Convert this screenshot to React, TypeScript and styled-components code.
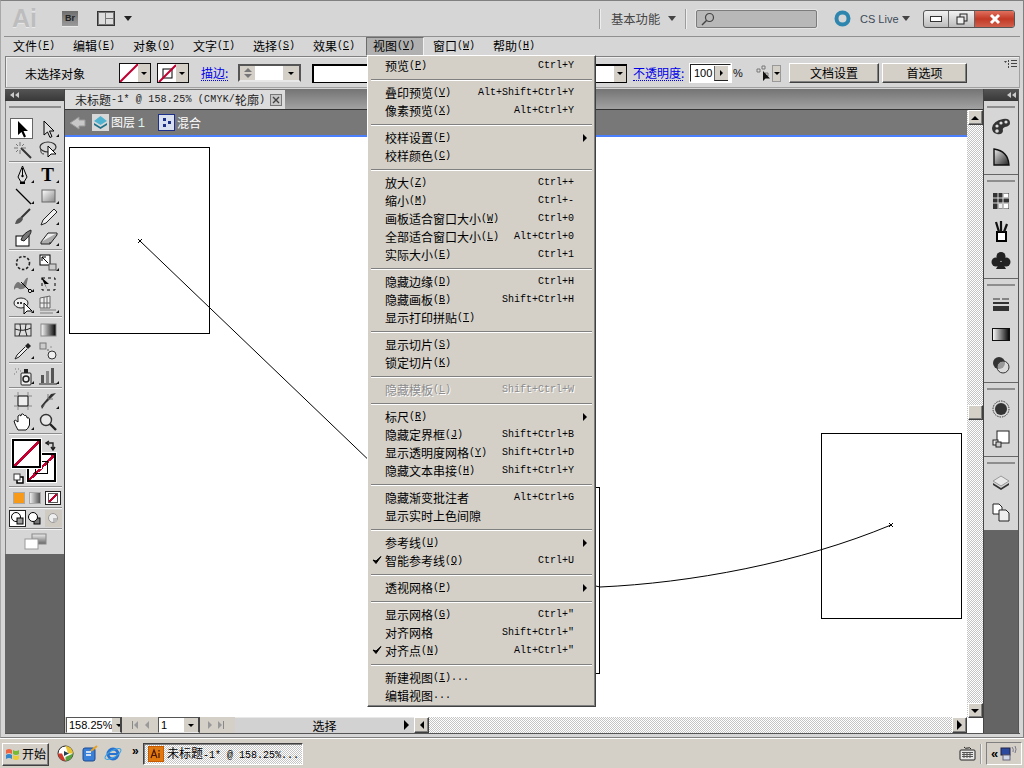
import React from "react";
import styled, { createGlobalStyle, css } from "styled-components";

const Global = createGlobalStyle`
  html, body { margin: 0; padding: 0; background: #d4d0c8; overflow: hidden; }
  body { font-family: "Noto Sans CJK SC", "Liberation Sans", sans-serif; font-size: 12px; color: #000; }
  svg { display: block; flex: none; }
`;

const raised = css`
  border: 1px solid; border-color: #fff #404040 #404040 #fff;
  box-shadow: inset -1px -1px 0 #808080;
`;
const sunken = css`
  border: 1px solid; border-color: #404040 #fff #fff #404040;
  box-shadow: inset 1px 1px 0 #808080, 0 0 0 0 #fff;
`;
const checker = css`
  background: repeating-conic-gradient(#fff 0 25%, #c4c4c4 0 50%) 0 0 / 2px 2px;
`;

const Root = styled.div`
  position: relative; width: 1024px; height: 768px; overflow: hidden;
  display: flex; flex-direction: column; background: #d6d6d6;
`;
const Frame = styled.div`
  height: 738px; display: flex; flex-direction: column; flex: none;
  border-top: 1px solid #808080; border-left: 1px solid #a8a8a8; border-right: 1px solid #808080; border-bottom: 1px solid #808080;
  box-sizing: border-box; background: #d6d6d6; padding: 0 3px 3px;
`;

/* App title bar */
const AppBar = styled.header`
  height: 35px; flex: none; display: flex; align-items: center; border-bottom: 1px solid #909090;
  box-sizing: content-box; margin: 0;
`;
const AiMark = styled.span`
  font: bold 25px/1 "Liberation Sans", sans-serif; color: #bdbdbd; margin-left: 8px; width: 41px;
  text-shadow: 0 1px 0 #e8e8e8;
`;
const BrBox = styled.span`
  width: 16px; height: 16px; box-sizing: border-box; margin-left: 9px; display: flex; align-items: center; justify-content: center;
  font: bold 9px "Liberation Sans", sans-serif; color: #222; background: linear-gradient(#6e6e6e, #9a9a9a);
  border-bottom: 1px solid #e8e8e8;
`;
const LayoutBtn = styled.span`
  width: 18px; height: 15px; box-sizing: border-box; margin-left: 19px; border: 1px solid #333; background: #777;
  display: grid; grid-template-columns: 6px 1fr; grid-template-rows: 1fr 1fr; gap: 1px; padding: 1px;
  & > i { background: #ddd; } & > i:first-child { grid-row: span 2; }
`;
const Drop = styled.span<{ $ml?: number; $c?: string }>`
  width: 0; height: 0; flex: none; margin-left: ${p => p.$ml ?? 0}px;
  border-left: 4px solid transparent; border-right: 4px solid transparent; border-top: 5px solid ${p => p.$c ?? "#222"};
`;
const Vr = styled.span<{ $ml: number }>`
  width: 1px; height: 20px; background: #9c9c9c; box-shadow: 1px 0 0 #eee; margin-left: ${p => p.$ml}px; flex: none;
`;
const WorkspaceName = styled.span`
  color: #444; margin-left: 11px; width: 49px; font-size: 12.3px; white-space: nowrap;
`;
const Search = styled.div`
  width: 121px; height: 18px; margin-left: 10px; box-sizing: border-box; background: #b8b8b8; border: 1px solid #7c7c7c;
  border-radius: 2px; box-shadow: 0 0 0 1px #e4e4e4; display: flex; align-items: center; padding-left: 4px;
`;
const RingWrap = styled.span` margin-left: 17px; flex: none; `;
const LiveText = styled.span`
  font: 11px "Liberation Sans", sans-serif; color: #3c4a58; margin-left: 9px; width: 38px; white-space: nowrap;
`;
const WinBtns = styled.div`
  display: flex; height: 18px; width: 92px; margin-left: 13px; flex: none; box-sizing: border-box;
  border: 1px solid #555; border-radius: 3px; overflow: hidden; background: linear-gradient(#f2f2f2, #bcbcbc);
`;
const WinBtn = styled.span<{ $w: number; $close?: boolean }>`
  width: ${p => p.$w}px; display: flex; align-items: center; justify-content: center; flex: none; box-sizing: border-box;
  border-right: 1px solid #666;
  ${p => p.$close && css`border: 0; background: linear-gradient(#e0705e, #c23a26 50%, #d0604c);`}
`;

/* Menu bar */
const MenuBar = styled.nav`
  height: 19px; flex: none; display: flex; padding-left: 2px; align-items: stretch;
`;
const MenuTop = styled.span<{ $active?: boolean }>`
  width: 60px; flex: none; box-sizing: border-box; padding: 0 0 1px 7px; display: flex; align-items: center; white-space: nowrap; line-height: 1;
  ${p => p.$active && css`
    width: 58px; margin-right: 2px; background: #b0b0b0; border: 1px solid; border-color: #6c6c6c #f0f0f0 #f0f0f0 #6c6c6c; padding-left: 6px;
  `}
`;
const Latin = styled.span`
  font-family: "Liberation Mono", monospace; font-size: 10px;
  & u { text-decoration-thickness: 1px; text-underline-offset: 1px; }
`;
const TabLatin = styled(Latin)` letter-spacing: .2px; `;

/* Control bar */
const ControlBar = styled.div`
  height: 32px; flex: none; display: flex; align-items: center; box-sizing: border-box; position: relative; padding-top: 2px;
  border: 1px solid; border-color: #808080 #a0a0a0 #a0a0a0 #808080; margin: 0 0 0 1px; box-shadow: inset 1px 1px 0 #eee;
`;
const Gripper = styled.span`
  width: 3px; height: 18px; margin-left: 4px; flex: none;
  background: radial-gradient(circle, #8a8a8a 45%, transparent 50%) 0 0 / 2px 2px;
`;
const NoSel = styled.span` margin-left: 12px; width: 94px; flex: none; white-space: nowrap; `;
const Swatch = styled.span<{ $ml: number }>`
  display: flex; width: 32px; height: 20px; box-sizing: border-box; border: 1px solid #111; margin-left: ${p => p.$ml}px; flex: none;
  background: #fff; box-shadow: 0 0 0 0 #fff;
`;
const SwatchDrop = styled.span<{ $w?: number }>`
  width: ${p => p.$w ?? 12}px; background: #d4d0c8; display: flex; align-items: center; justify-content: center; flex: none; box-sizing: border-box; margin-left: auto;
`;
const LinkLabel = styled.span<{ $ml: number; $w: number }>`
  color: #0000e6; margin-left: ${p => p.$ml}px; width: ${p => p.$w}px; flex: none; white-space: nowrap; line-height: 14px;
  border-bottom: 1px dotted #0000e6;
`;
const Spinner = styled.span`
  display: flex; width: 63px; height: 18px; box-sizing: border-box; margin-left: 10px; flex: none; border: 2px solid; border-color: #555 #555 #e8e8e8 #555;
  background: #fff;
`;
const SpinBtns = styled.span`
  width: 15px; background: #d4d0c8; display: flex; flex-direction: column; align-items: center; justify-content: space-around; flex: none; padding: 1px 0; box-sizing: border-box;
`;
const Tri = styled.span<{ $dir: "up" | "down" | "left" | "right"; $c?: string; $s?: number }>`
  width: 0; height: 0; flex: none; display: block;
  ${p => {
    const s = p.$s ?? 4; const c = p.$c ?? "#000";
    switch (p.$dir) {
      case "up": return `border-left:${s}px solid transparent;border-right:${s}px solid transparent;border-bottom:${s}px solid ${c};`;
      case "down": return `border-left:${s}px solid transparent;border-right:${s}px solid transparent;border-top:${s}px solid ${c};`;
      case "left": return `border-top:${s}px solid transparent;border-bottom:${s}px solid transparent;border-right:${s}px solid ${c};`;
      default: return `border-top:${s}px solid transparent;border-bottom:${s}px solid transparent;border-left:${s}px solid ${c};`;
    }
  }}
`;
const BrushField = styled.span`
  display: flex; width: 315px; height: 19px; box-sizing: border-box; margin-left: 11px; flex: none;
  border: 1px solid #000; border-right-color: #111; border-top-width: 2px; border-left-width: 2px; background: #fff;
`;
const OpacityInput = styled.span`
  display: flex; align-items: center; width: 41px; height: 18px; box-sizing: border-box; margin-left: 7px; flex: none;
  border: 1px solid; border-color: #222 #fff #fff #222; background: #fff; outline: 1px solid #fff;
  font: 11px "Liberation Sans", sans-serif; padding-left: 3px;
`;
const OpacityStep = styled.span`
  width: 14px; height: 15px; margin-left: auto; background: #d4d0c8; display: flex; align-items: center; justify-content: center; box-sizing: border-box;
  border-left: 1px solid #666; border-bottom: 1px solid #222; margin-right: 2px;
`;
const Percent = styled.span` font: 11px "Liberation Sans", sans-serif; margin-left: 2px; width: 22px; flex: none; color: #111; `;
const IsoDrop = styled.span`
  width: 9px; height: 17px; box-sizing: border-box; border: 1px solid #999; margin-left: 1px; display: flex; align-items: center; justify-content: center; background: #d4d0c8; flex: none;
`;
const PushBtn = styled.span<{ $w: number; $ml: number }>`
  ${raised}
  width: ${p => p.$w}px; height: 20px; margin-left: ${p => p.$ml}px; box-sizing: border-box; flex: none;
  background: #d4d0c8; display: flex; align-items: center; justify-content: center; white-space: nowrap; line-height: 1;
`;
const PanelMenu = styled.span`
  position: absolute; right: 2px; top: 2px;
`;

/* Workspace */
const Work = styled.div`
  flex: 1; min-height: 0; display: flex; margin: 1px 0 0 1px; border-bottom: 1px solid #555;
`;
const DockHeader = styled.div`
  height: 12px; flex: none; background: linear-gradient(#555, #383838); display: flex; align-items: center;
`;
const DockChevrons = styled.span<{ $ml: number }>` margin-left: ${p => p.$ml}px; `;
const LeftDock = styled.aside`
  width: 60px; flex: none; display: flex; flex-direction: column; background: #646464; border-right: 1px solid #444; box-sizing: border-box;
`;
const ToolPanel = styled.div`
  background: #d6d6d6; height: 453px; flex: none; display: flex; flex-direction: column; align-items: center;
  border-left: 1px solid #808080; box-sizing: border-box; padding-top: 5px;
`;
const Dots = styled.span<{ $w: number }>`
  width: ${p => p.$w}px; height: 2px; flex: none;
  background: radial-gradient(circle, #8e8e8e 50%, transparent 55%) 0 0 / 2px 2px;
`;
const ToolGrid = styled.div<{ $pt?: number }>`
  display: grid; grid-template-columns: 25px 25px; grid-auto-rows: 21px; padding: ${p => p.$pt ?? 1}px 0 1px; width: 50px;
`;
const Tool = styled.span<{ $fly?: boolean; $sel?: boolean }>`
  position: relative; display: flex; align-items: center; justify-content: center;
  ${p => p.$sel && css`background: #fff; border: 1px solid #666; margin: 0 2px 0 0; box-sizing: border-box;`}
  ${p => p.$fly && css`
    &::after { content: ""; position: absolute; right: 1px; bottom: 2px; border-left: 3px solid transparent; border-bottom: 3px solid #111; }
  `}
`;
const Rule = styled.div`
  width: 53px; height: 1px; background: #8c8c8c; box-shadow: 0 1px 0 #f4f4f4; margin-bottom: 1px; flex: none;
`;
const FillStroke = styled.div`
  position: relative; width: 50px; height: 50px; flex: none; margin-top: 1px;
`;
const FillBox = styled.span`
  position: absolute; left: 2px; top: 3px; width: 29px; height: 29px; box-sizing: border-box; z-index: 2;
  border: 2px solid #000; outline: 1px solid #fff;
  background: linear-gradient(to top left, #fff 46%, #c00030 46%, #c00030 54%, #fff 54%);
`;
const StrokeBox = styled.span`
  position: absolute; left: 17px; top: 17px; width: 29px; height: 29px; box-sizing: border-box; z-index: 1;
  border: 2px solid #000; outline: 1px solid #fff;
  background: linear-gradient(to top left, #fff 46%, #c00030 46%, #c00030 54%, #fff 54%);
  &::after { content: ""; position: absolute; left: 6px; top: 6px; width: 11px; height: 11px; border: 1px solid #000; }
`;
const SwapMark = styled.span` position: absolute; right: 3px; top: 3px; `;
const DefaultMark = styled.span` position: absolute; left: 3px; bottom: 2px; z-index: 3; `;
const ColorModes = styled.div`
  display: flex; align-items: center; width: 53px; height: 16px; margin-top: 2px; margin-bottom: 1px; justify-content: space-between; padding: 0 1px 0 4px; box-sizing: border-box;
`;
const ModeFill = styled.span<{ $bg: string }>`
  width: 10px; height: 10px; border: 1px solid #aaa; background: ${p => p.$bg}; display: block;
`;
const ModeNone = styled.span`
  width: 16px; height: 14px; box-sizing: border-box; border: 1px solid #222; background: #fff; padding: 1px 2px; display: flex;
  & > i { flex: 1; background: linear-gradient(to top left, #fff 42%, #c00030 42%, #c00030 58%, #fff 58%); border: 1px solid #555; }
`;
const DrawModes = styled.div` display: flex; width: 53px; height: 19px; align-items: center; gap: 1px; `;
const DrawMode = styled.span<{ $sel?: boolean; $dim?: boolean }>`
  width: 17px; height: 17px; box-sizing: border-box; display: flex; align-items: center; justify-content: center;
  ${p => p.$sel && "border: 1px solid #222; background: #fff;"}
  ${p => p.$dim && "background: #cfcbc3; margin-left: 1px;"}
`;
const ScreenBtn = styled.div` height: 22px; display: flex; align-items: center; justify-content: center; width: 53px; flex: none; margin-top: 1px; `;

const DocArea = styled.div` width: 918px; flex: none; display: flex; flex-direction: column; min-width: 0; `;
const TabStrip = styled.div`
  height: 21px; flex: none; display: flex; background: linear-gradient(#747474, #a2a2a2); border-bottom: 1px solid #333; box-sizing: border-box;
`;
const DocTab = styled.div`
  width: 220px; height: 19px; margin-top: 1px; box-sizing: border-box; background: #dcdcdc; display: flex; align-items: center; padding-left: 10px; white-space: nowrap; line-height: 1; position: relative; color: #222;
`;
const CloseX = styled.span`
  margin-left: auto; margin-right: 3px; width: 12px; height: 12px; box-sizing: border-box; background: #c8c8c8; border: 1px solid #777; display: flex; align-items: center; justify-content: center; flex: none;
`;
const DocBody = styled.div` flex: 1; min-height: 0; display: flex; `;
const DocMain = styled.div` width: 902px; flex: none; display: flex; flex-direction: column; `;
const LayerBar = styled.div`
  height: 25px; flex: none; background: #787878; display: flex; align-items: center; padding-left: 4px; color: #fff; line-height: 1;
`;
const LayerIcon = styled.span` margin-left: 5px; flex: none; `;
const LayerText = styled.span<{ $w?: number }>` margin-left: 2px; white-space: nowrap; width: ${p => p.$w ?? 36}px; flex: none; `;
const CrumbNum = styled.span` font-family: "Liberation Mono", monospace; font-size: 12px; color: #dff5ea; `;
const Canvas = styled.div`
  position: relative; flex: 1; min-height: 0; border-top: 2px solid #4a7fff; background: #fff; overflow: hidden;
`;
const Artboard = styled.div<{ $x: number; $y: number; $w: number; $h: number }>`
  position: absolute; left: ${p => p.$x}px; top: ${p => p.$y}px; width: ${p => p.$w}px; height: ${p => p.$h}px;
  box-sizing: border-box; border: 1px solid #000;
`;
const Artwork = styled.svg` position: absolute; left: 0; top: 0; `;

const StatusBar = styled.div`
  height: 16px; flex: none; display: flex; align-items: stretch; background: #d4d0c8;
`;
const ZoomBox = styled.span<{ $w: number; $ml: number }>`
  display: flex; width: ${p => p.$w}px; margin-left: ${p => p.$ml}px; box-sizing: border-box; flex: none; background: #fff;
  border: 1px solid; border-color: #555 #444 #e8e8e8 #555; border-width: 1px 2px 1px 1px;
  font: 11px/14px "Liberation Sans", sans-serif; padding-left: 2px; align-items: center; overflow: hidden;
`;
const BoxDrop = styled.span`
  width: 14px; align-self: stretch; margin-left: auto; background: #d4d0c8; display: flex; align-items: center; justify-content: center; flex: none;
`;
const NavGroup = styled.span<{ $w: number }>`
  width: ${p => p.$w}px; flex: none; display: flex; align-items: center; justify-content: space-around; padding: 0 5px; box-sizing: border-box;
`;
const NavEnd = styled.span<{ $flip?: boolean }>`
  display: flex; align-items: center; ${p => p.$flip && "flex-direction: row-reverse;"}
  & > b { width: 1px; height: 8px; background: #888; margin: 0 1px; }
`;
const StatusField = styled.span`
  position: relative; width: 179px; flex: none; background: #d2d2d2; display: flex; align-items: center; justify-content: center; margin-left: 2px; line-height: 1; border-top: 1px solid #e8e8e8; box-sizing: border-box;
`;
const StatusArrow = styled.span` position: absolute; right: 5px; top: 2px; `;
const ScrollBtn = styled.span<{ $w?: number; $h?: number }>`
  ${raised}
  width: ${p => p.$w ?? 15}px; height: ${p => p.$h ?? 15}px; box-sizing: border-box; background: #d4d0c8; display: flex; align-items: center; justify-content: center; flex: none;
`;
const HTrack = styled.span` flex: 1; ${checker} `;
const VScroll = styled.div`
  width: 16px; flex: none; display: flex; flex-direction: column; align-items: center; ${checker}
`;
const VGap = styled.span<{ $h: number }>` height: ${p => p.$h}px; flex: none; `;
const VCorner = styled.span` width: 16px; flex: 1; background: #fff; `;

const RightDock = styled.aside`
  width: 36px; flex: none; display: flex; flex-direction: column; background: #646464; border-left: 1px solid #444; box-sizing: border-box; border-right: 1px solid #555;
`;
const DockGroup = styled.div<{ $h: number }>`
  height: ${p => p.$h}px; background: #d6d6d6; flex: none; box-sizing: border-box; border-bottom: 1px solid #666;
  display: flex; flex-direction: column; align-items: center; padding-top: 5px;
`;
const DockIcon = styled.span`
  height: 30px; flex: none; width: 100%; display: flex; align-items: center; justify-content: center;
  ${Dots} + & { margin-top: 4px; }
`;

/* Menu popup */
const Menu = styled.div`
  position: absolute; left: 367px; top: 55px; width: 229px; height: 652px; box-sizing: border-box; z-index: 5;
  background: #d4d0c8; border: 1px solid; border-color: #fff #404040 #404040 #fff; box-shadow: inset -1px -1px 0 #808080;
  padding-top: 1px; line-height: 1; font-size: 12px;
`;
const Row = styled.div<{ $off?: boolean }>`
  position: relative; height: 18px; display: flex; align-items: center; padding: 0 21px 0 17px; white-space: nowrap;
  ${p => p.$off && "color: #8c8c8c; text-shadow: 1px 1px 0 #fff;"}
`;
const Shortcut = styled.span`
  margin-left: auto; font-family: "Liberation Mono", monospace; font-size: 10px;
`;
const Sub = styled.span`
  position: absolute; right: 8px; top: 5px; border-top: 4px solid transparent; border-bottom: 4px solid transparent; border-left: 4px solid #000;
`;
const Check = styled.span` position: absolute; left: 4px; top: 3px; `;
const Sep = styled.div`
  height: 9px; display: flex; align-items: center; padding: 0 3px;
  &::before { content: ""; display: block; flex: 1; height: 1px; background: #808080; box-shadow: 0 1px 0 #fff; }
`;

/* Windows taskbar */
const Taskbar = styled.footer`
  height: 30px; flex: none; background: #d4d0c8; border-top: 1px solid #fff; box-sizing: border-box; display: flex; align-items: center; padding-left: 2px;
`;
const StartBtn = styled.span`
  ${raised}
  width: 47px; height: 23px; box-sizing: border-box; display: flex; align-items: center; padding-left: 2px; gap: 2px; flex: none; line-height: 1; margin-top: 1px;
`;
const Quick = styled.span<{ $ml: number }>` margin-left: ${p => p.$ml}px; flex: none; `;
const Chev = styled.span`
  font: bold 12px "Liberation Sans", sans-serif; margin-left: 10px; margin-top: -5px; width: 11px; flex: none;
`;
const TaskBtn = styled.span`
  ${sunken}
  ${checker}
  width: 160px; height: 22px; box-sizing: border-box; display: flex; align-items: center; padding-left: 4px; gap: 3px; flex: none; white-space: nowrap; line-height: 1;
`;
const Tray = styled.span`
  margin-left: auto; display: flex; align-items: center; height: 100%;
`;
const TrayBox = styled.span`
  width: 36px; height: 23px; box-sizing: border-box; margin: 0 2px 0 5px; border: 1px solid; border-color: #808080 #fff #fff #808080; display: flex; align-items: center; gap: 2px; padding-left: 4px; font: bold 13px "Liberation Sans", sans-serif;
`;

const S: React.FC<{ s?: number; w?: number; h?: number; vb?: string; children: React.ReactNode }> = ({ s = 20, w, h, vb, children }) => (
  <svg width={w ?? s} height={h ?? s} viewBox={vb ?? `0 0 ${w ?? s} ${h ?? s}`}>{children}</svg>
);

const Mn: React.FC<{ k: string }> = ({ k }) => <Latin>(<u>{k}</u>)</Latin>;

type Entry = { sep: true } | { t: string; k?: string; sc?: string; sub?: boolean; ck?: boolean; off?: boolean; tail?: string };
const SEP: Entry = { sep: true };
const ITEMS: Entry[] = [
  { t: "预览", k: "P", sc: "Ctrl+Y" }, SEP,
  { t: "叠印预览", k: "V", sc: "Alt+Shift+Ctrl+Y" }, { t: "像素预览", k: "X", sc: "Alt+Ctrl+Y" }, SEP,
  { t: "校样设置", k: "F", sub: true }, { t: "校样颜色", k: "C" }, SEP,
  { t: "放大", k: "Z", sc: "Ctrl++" }, { t: "缩小", k: "M", sc: "Ctrl+-" },
  { t: "画板适合窗口大小", k: "W", sc: "Ctrl+0" }, { t: "全部适合窗口大小", k: "L", sc: "Alt+Ctrl+0" }, { t: "实际大小", k: "E", sc: "Ctrl+1" }, SEP,
  { t: "隐藏边缘", k: "D", sc: "Ctrl+H" }, { t: "隐藏画板", k: "B", sc: "Shift+Ctrl+H" }, { t: "显示打印拼贴", k: "T" }, SEP,
  { t: "显示切片", k: "S" }, { t: "锁定切片", k: "K" }, SEP,
  { t: "隐藏模板", k: "L", sc: "Shift+Ctrl+W", off: true }, SEP,
  { t: "标尺", k: "R", sub: true }, { t: "隐藏定界框", k: "J", sc: "Shift+Ctrl+B" }, { t: "显示透明度网格", k: "Y", sc: "Shift+Ctrl+D" }, { t: "隐藏文本串接", k: "H", sc: "Shift+Ctrl+Y" }, SEP,
  { t: "隐藏渐变批注者", sc: "Alt+Ctrl+G" }, { t: "显示实时上色间隙" }, SEP,
  { t: "参考线", k: "U", sub: true }, { t: "智能参考线", k: "Q", sc: "Ctrl+U", ck: true }, SEP,
  { t: "透视网格", k: "P", sub: true }, SEP,
  { t: "显示网格", k: "G", sc: 'Ctrl+"' }, { t: "对齐网格", sc: 'Shift+Ctrl+"' }, { t: "对齐点", k: "N", sc: 'Alt+Ctrl+"', ck: true }, SEP,
  { t: "新建视图", k: "I", tail: "..." }, { t: "编辑视图", tail: "..." },
];

const TOPS: [string, string][] = [["文件", "F"], ["编辑", "E"], ["对象", "O"], ["文字", "T"], ["选择", "S"], ["效果", "C"], ["视图", "V"], ["窗口", "W"], ["帮助", "H"]];

const CheckMark = () => <S w={10} h={10}><path d="M1 5 L4 8.5 L9 1.5 L4 6 Z" fill="#000" stroke="#000" strokeWidth="1" /></S>;

const RedSlash = ({ w, h }: { w: number; h: number }) => <S w={w} h={h}><line x1="0" y1={h} x2={w} y2="0" stroke="#c00030" strokeWidth="2" /></S>;

const Serif = styled.span` font: bold 19px/1 "Liberation Serif", serif; `;

/* tool icons (20x20) */
const Ic = {
  sel: <S><path d="M6 2 V16 L9.5 13 L12 18.5 L14 17.5 L11.5 12 L16 12 Z" fill="#000" /></S>,
  dsel: <S><path d="M6 2 V16 L9.5 13 L12 18.5 L14 17.5 L11.5 12 L16 12 Z" fill="#ddd" stroke="#000" /></S>,
  wand: <S><line x1="8" y1="8" x2="18" y2="18" stroke="#333" strokeWidth="2" /><path d="M7 2V6M7 10V14M1 8H5M9 8H13M3 4L5 6M11 4L9 6M3 12L5 10" stroke="#777" /></S>,
  lasso: <S><ellipse cx="10" cy="7" rx="8" ry="5" fill="none" stroke="#333" strokeWidth="1.2" /><path d="M3 9 Q2 14 6 14" fill="none" stroke="#333" /><path d="M10 6 V17 L13 14 L18 14 Z" fill="#fff" stroke="#000" /></S>,
  pen: <S><path d="M9.5 1 L14 12 L11 17 H8 L5 12 Z" fill="#ddd" stroke="#000" /><path d="M9.5 3V10" stroke="#000" /><circle cx="9.5" cy="11" r="1.2" fill="#000" /><rect x="7" y="17" width="5" height="2" fill="#000" /></S>,
  text: <Serif>T</Serif>,
  line: <S><line x1="3" y1="3" x2="18" y2="18" stroke="#000" strokeWidth="1.2" /></S>,
  rect: <S><defs><linearGradient id="gr1" x1="0" y1="0" x2="1" y2="1"><stop offset="0" stopColor="#fff" /><stop offset="1" stopColor="#888" /></linearGradient></defs><rect x="4" y="4" width="13" height="12" fill="url(#gr1)" stroke="#666" /></S>,
  brush: <S><path d="M17 2 L8 11" stroke="#333" strokeWidth="2" /><path d="M9 10 Q3 11 2 17 Q8 17 10 12 Z" fill="#555" /></S>,
  pencil: <S><path d="M16 2 L19 5 L8 16 L3 18 L5 13 Z" fill="#eee" stroke="#222" /></S>,
  blob: <S><rect x="3" y="8" width="13" height="10" fill="#fff" stroke="#000" /><path d="M8 12 Q10 5 18 2 Q19 6 11 13 Z" fill="#777" stroke="#222" /></S>,
  eraser: <S><path d="M3 14 L10 5 H19 L12 14 Z" fill="#eee" stroke="#222" /><path d="M3 14 V16 H12 L19 7 V5 M12 14 V16" fill="#aaa" stroke="#222" /></S>,
  rotate: <S><circle cx="10" cy="10" r="6.5" fill="none" stroke="#222" strokeWidth="1.6" strokeDasharray="2.5 1.8" /></S>,
  scale: <S><rect x="2" y="2" width="10" height="10" fill="#fff" stroke="#000" /><rect x="11" y="11" width="7" height="6" fill="#ccc" stroke="#555" /><path d="M4 4 L10 10 M4 4 H8 M4 4 V8" stroke="#000" /></S>,
  warp: <S><path d="M1 13 Q4 6 7 9 Q9 12 12 6 Q14 3 15 4 L13 13 Q8 17 5 14 Q3 13 1 16 Z" fill="#777" /><line x1="8" y1="8" x2="17" y2="17" stroke="#000" /><circle cx="17" cy="17" r="1.6" fill="#fff" stroke="#000" /></S>,
  free: <S><rect x="4" y="4" width="13" height="12" fill="none" stroke="#000" strokeDasharray="3 3" /><path d="M3 3 L11 10 H7 L9 15 Z" fill="#000" /></S>,
  shape: <S><ellipse cx="8" cy="8" rx="7" ry="5" fill="#eee" stroke="#222" /><circle cx="5" cy="8" r="1" fill="#000" /><circle cx="8" cy="8" r="1" fill="#000" /><path d="M11 8 V19 L14 16 L19 16 Z" fill="#fff" stroke="#000" /></S>,
  persp: <S><path d="M2 3 L12 1 V13 H2 Z" fill="#eee" stroke="#666" /><path d="M6 2V13M9 2V13M2 8H12" stroke="#666" /><path d="M2 15 H18 M2 18 H15" stroke="#aaa" strokeWidth="2" /></S>,
  mesh: <S><rect x="2" y="4" width="16" height="12" fill="#ddd" stroke="#333" /><path d="M7 4 Q9 10 6 16 M13 4 Q11 10 14 16 M2 9 Q10 12 18 8" fill="none" stroke="#222" /></S>,
  grad: <S><defs><linearGradient id="gr2"><stop offset="0" stopColor="#fff" /><stop offset="1" stopColor="#000" /></linearGradient></defs><rect x="3" y="4" width="15" height="12" fill="url(#gr2)" stroke="#888" /></S>,
  drop: <S><path d="M15 2 L18 5 L15 8 L12 5 Z" fill="#222" /><path d="M12 6 L4 14 L2 18 L6 16 L14 8" fill="#eee" stroke="#222" /></S>,
  blend: <S><rect x="2" y="2" width="6" height="6" fill="#ccc" stroke="#777" /><circle cx="10" cy="9" r="1" fill="#888" /><circle cx="13" cy="6" r=".8" fill="#888" /><circle cx="14" cy="14" r="4" fill="#eee" stroke="#333" /></S>,
  spray: <S><rect x="8" y="7" width="10" height="12" rx="1" fill="#eee" stroke="#222" /><circle cx="13" cy="13" r="3" fill="none" stroke="#222" strokeWidth="1.5" /><rect x="11" y="3" width="4" height="4" fill="#222" /><path d="M2 3h1M5 3h1M3 6h1M7 5h1M1 8h1" stroke="#777" /></S>,
  graph: <S><rect x="3" y="9" width="3" height="8" fill="#555" /><rect x="8" y="5" width="3" height="12" fill="#888" /><rect x="13" y="2" width="3" height="15" fill="#555" /><path d="M1 18H19" stroke="#222" /></S>,
  board: <S><rect x="5" y="5" width="10" height="10" fill="#eee" stroke="#000" /><path d="M1 5H4M1 15H4M16 5H19M16 15H19M5 1V4M15 1V4M5 16V19M15 16V19" stroke="#888" /></S>,
  slice: <S><path d="M18 2 L8 12 L4 18 L3 15 L13 3 Z" fill="#333" /><path d="M8 12 L12 9 L3 17 Z" fill="#bbb" /><path d="M10 3V8H15" fill="none" stroke="#777" /></S>,
  hand: <S><path d="M5 18 Q2 13 1 9 Q2 7 5 10 L5 4 Q6.5 2 8 4 V2.5 Q10 1 11 3 L11.5 3.5 Q13 2.5 14 5 V6 Q16 5 16.5 7 V13 Q15 17 13 18 Z" fill="#fff" stroke="#111" /></S>,
  zoom: <S><circle cx="8" cy="8" r="5.5" fill="#e8e8e8" stroke="#333" strokeWidth="1.4" /><line x1="12" y1="12" x2="18" y2="18" stroke="#222" strokeWidth="2.4" /></S>,
};

const Arrow = () => <Tri $dir="down" $s={3} />;

export default function App() {
  return (
    <Root>
      <Global />
      <Frame>
        <AppBar>
          <AiMark>Ai</AiMark>
          <BrBox>Br</BrBox>
          <LayoutBtn><i /><i /><i /></LayoutBtn>
          <Drop $ml={9} />
          <Vr $ml={467} />
          <WorkspaceName>基本功能</WorkspaceName>
          <Drop $ml={8} $c="#444" />
          <Vr $ml={9} />
          <Search>
            <S s={14}><circle cx="8.5" cy="5.5" r="4" fill="none" stroke="#444" strokeWidth="1.2" /><line x1="5.5" y1="8.5" x2="1" y2="13" stroke="#444" strokeWidth="1.4" /></S>
          </Search>
          <RingWrap>
            <S s={17}><circle cx="8.5" cy="8.5" r="6" fill="none" stroke="#2e86ae" strokeWidth="4" /></S>
          </RingWrap>
          <LiveText>CS Live</LiveText>
          <Drop $ml={4} $c="#444" />
          <WinBtns>
            <WinBtn $w={25}><S w={12} h={6}><rect x=".5" y=".5" width="11" height="5" fill="#fff" stroke="#333" /></S></WinBtn>
            <WinBtn $w={26}><S s={12}><rect x="4" y="1" width="7" height="7" fill="none" stroke="#222" /><rect x="1" y="4" width="7" height="7" fill="#eee" stroke="#222" /></S></WinBtn>
            <WinBtn $w={39} $close><S s={12}><path d="M2 2 L10 10 M10 2 L2 10" stroke="#fff" strokeWidth="3" /></S></WinBtn>
          </WinBtns>
        </AppBar>
        <MenuBar>
          {TOPS.map(([t, k]) => <MenuTop key={k} $active={t === "视图"}>{t}<Mn k={k} /></MenuTop>)}
        </MenuBar>
        <ControlBar>
          <Gripper />
          <NoSel>未选择对象</NoSel>
          <Swatch $ml={0}><RedSlash w={18} h={18} /><SwatchDrop><Arrow /></SwatchDrop></Swatch>
          <Swatch $ml={6}>
            <S w={18} h={18}><rect x="5" y="5" width="9" height="9" fill="#fff" stroke="#000" /><line x1="1" y1="18" x2="18" y2="1" stroke="#c00030" strokeWidth="2" /></S>
            <SwatchDrop><Arrow /></SwatchDrop>
          </Swatch>
          <LinkLabel $ml={12} $w={27}>描边:</LinkLabel>
          <Spinner>
            <SpinBtns><Tri $dir="up" $s={4} $c="#777" /><Tri $dir="down" $s={4} $c="#777" /></SpinBtns>
            <SwatchDrop $w={16}><Arrow /></SwatchDrop>
          </Spinner>
          <BrushField><SwatchDrop $w={12}><Arrow /></SwatchDrop></BrushField>
          <LinkLabel $ml={6} $w={50}>不透明度:</LinkLabel>
          <OpacityInput>100<OpacityStep><Tri $dir="right" $s={3} /></OpacityStep></OpacityInput>
          <Percent>%</Percent>
          <S s={16} w={16} h={18}><path d="M2 5h3v3H2zM7 2h3v3H7zM10 9h3v3h-3z" fill="#ddd" stroke="#777" /><path d="M8 7 V17 L10.5 14.5 L15 14.5 Z" fill="#111" /></S>
          <IsoDrop><Arrow /></IsoDrop>
          <PushBtn $w={90} $ml={8}>文档设置</PushBtn>
          <PushBtn $w={85} $ml={3}>首选项</PushBtn>
          <PanelMenu><S w={14} h={9}><path d="M1 2h3L2.5 4zM5 1h1v2H5zM8 1h6v1H8zM5 4h1v2H5zM8 4h6v1H8zM5 7h1v2H5zM8 7h6v1H8z" fill="#444" /></S></PanelMenu>
        </ControlBar>
        <Work>
          <LeftDock>
            <DockHeader><DockChevrons $ml={5}><S w={9} h={6}><path d="M4 0 V6 L0 3 Z M9 0 V6 L5 3 Z" fill="#ccc" /></S></DockChevrons></DockHeader>
            <ToolPanel>
              <Dots $w={52} />
              <ToolGrid $pt={10}>
                <Tool $sel>{Ic.sel}</Tool><Tool $fly>{Ic.dsel}</Tool>
                <Tool>{Ic.wand}</Tool><Tool>{Ic.lasso}</Tool>
              </ToolGrid>
              <Rule />
              <ToolGrid>
                <Tool $fly>{Ic.pen}</Tool><Tool $fly>{Ic.text}</Tool>
                <Tool $fly>{Ic.line}</Tool><Tool $fly>{Ic.rect}</Tool>
                <Tool>{Ic.brush}</Tool><Tool $fly>{Ic.pencil}</Tool>
                <Tool>{Ic.blob}</Tool><Tool $fly>{Ic.eraser}</Tool>
              </ToolGrid>
              <Rule />
              <ToolGrid>
                <Tool $fly>{Ic.rotate}</Tool><Tool $fly>{Ic.scale}</Tool>
                <Tool $fly>{Ic.warp}</Tool><Tool>{Ic.free}</Tool>
                <Tool $fly>{Ic.shape}</Tool><Tool $fly>{Ic.persp}</Tool>
              </ToolGrid>
              <Rule />
              <ToolGrid>
                <Tool>{Ic.mesh}</Tool><Tool>{Ic.grad}</Tool>
                <Tool $fly>{Ic.drop}</Tool><Tool>{Ic.blend}</Tool>
              </ToolGrid>
              <Rule />
              <ToolGrid>
                <Tool $fly>{Ic.spray}</Tool><Tool $fly>{Ic.graph}</Tool>
              </ToolGrid>
              <Rule />
              <ToolGrid>
                <Tool>{Ic.board}</Tool><Tool $fly>{Ic.slice}</Tool>
                <Tool $fly>{Ic.hand}</Tool><Tool>{Ic.zoom}</Tool>
              </ToolGrid>
              <Rule />
              <FillStroke>
                <FillBox /><StrokeBox />
                <SwapMark><S s={12}><path d="M2 4 H8 V10 M6 8 L8 11 L10 8 M4 2 L1 4 L4 6" fill="none" stroke="#222" strokeWidth="1.4" /></S></SwapMark>
                <DefaultMark><S s={11}><rect x="4" y="4" width="6" height="6" fill="#fff" stroke="#000" strokeWidth="1.5" /><rect x="1" y="1" width="6" height="6" fill="#fff" stroke="#333" /></S></DefaultMark>
              </FillStroke>
              <Rule />
              <ColorModes>
                <ModeFill $bg="#f79a1a" />
                <ModeFill $bg="linear-gradient(to right,#eee,#555)" />
                <ModeNone><i /></ModeNone>
              </ColorModes>
              <Rule />
              <DrawModes>
                <DrawMode $sel><S s={15}><circle cx="6" cy="6" r="4.5" fill="#fff" stroke="#000" /><rect x="7" y="7" width="6" height="6" fill="#999" stroke="#000" /></S></DrawMode>
                <DrawMode><S s={15}><rect x="7" y="7" width="6" height="6" fill="#777" stroke="#000" /><circle cx="6" cy="6" r="4.5" fill="#fff" stroke="#000" /></S></DrawMode>
                <DrawMode $dim><S s={13}><circle cx="6" cy="6" r="4.5" fill="#eee" stroke="#999" /><rect x="6" y="6" width="4" height="4" fill="#bbb" /></S></DrawMode>
              </DrawModes>
              <Rule />
              <ScreenBtn>
                <S w={24} h={18}><defs><linearGradient id="gr3" x1="0" y1="0" x2="0" y2="1"><stop offset="0" stopColor="#eee" /><stop offset="1" stopColor="#666" /></linearGradient></defs><rect x="9" y="1" width="14" height="10" fill="url(#gr3)" stroke="#888" /><rect x="2" y="6" width="13" height="10" fill="#fff" stroke="#999" /></S>
              </ScreenBtn>
            </ToolPanel>
          </LeftDock>
          <DocArea>
            <TabStrip>
              <DocTab>未标题<TabLatin>-1* @ 158.25% (CMYK/</TabLatin>轮廓<TabLatin>)</TabLatin>
                <CloseX><S s={8}><path d="M1 1 L7 7 M7 1 L1 7" stroke="#444" strokeWidth="1.4" /></S></CloseX>
              </DocTab>
            </TabStrip>
            <DocBody>
              <DocMain>
                <LayerBar>
                  <S w={18} h={16}><path d="M1 8 L10 2 V5 H16 V11 H10 V14 Z" fill="#c8c8c8" stroke="#999" /></S>
                  <LayerIcon>
                    <S w={17} h={17}><rect width="17" height="17" fill="#d8d8d8" /><path d="M8.5 2 L15 7 L8.5 11 L2 7 Z" fill="#4fb3d0" /><path d="M2 9 L8.5 13 L15 9 L15 11 L8.5 15 L2 11 Z" fill="#1e6f88" /></S>
                  </LayerIcon>
                  <LayerText $w={47}>图层 <CrumbNum>1</CrumbNum></LayerText>
                  <S w={17} h={17}><rect x=".5" y=".5" width="16" height="16" fill="#d8e0f0" stroke="#1c2f8a" /><rect x="5" y="4" width="3" height="3" fill="#1c2f8a" /><rect x="10" y="7" width="3" height="3" fill="#1c2f8a" /><rect x="5" y="10" width="3" height="3" fill="#1c2f8a" /></S>
                  <LayerText>混合</LayerText>
                </LayerBar>
                <Canvas>
                  <Artboard $x={4} $y={10} $w={141} $h={187} />
                  <Artboard $x={394} $y={350} $w={141} $h={187} />
                  <Artboard $x={756} $y={296} $w={141} $h={186} />
                  <Artwork width="902" height="580" viewBox="65 137 902 580">
                    <path d="M140 241 L400 490 Q470 560 600 587 C 690 583 800 563 891 525" fill="none" stroke="#000" strokeWidth="1" />
                    <path d="M138 239 L142 243 M142 239 L138 243 M889 523 L893 527 M893 523 L889 527" stroke="#000" />
                  </Artwork>
                </Canvas>
                <StatusBar>
                  <ZoomBox $w={56} $ml={1}>158.25%<BoxDrop><Arrow /></BoxDrop></ZoomBox>
                  <NavGroup $w={36}>
                    <NavEnd><b /><Tri $dir="left" $s={4} $c="#999" /></NavEnd>
                    <Tri $dir="left" $s={4} $c="#999" />
                  </NavGroup>
                  <ZoomBox $w={42} $ml={0}>1<BoxDrop><Arrow /></BoxDrop></ZoomBox>
                  <NavGroup $w={33}>
                    <Tri $dir="right" $s={4} $c="#999" />
                    <NavEnd $flip><b /><Tri $dir="right" $s={4} $c="#999" /></NavEnd>
                  </NavGroup>
                  <StatusField>选择<StatusArrow><Tri $dir="right" $s={5} /></StatusArrow></StatusField>
                  <ScrollBtn $h={16}><Tri $dir="left" $s={4} /></ScrollBtn>
                  <HTrack />
                  <ScrollBtn $h={16}><Tri $dir="right" $s={5} /></ScrollBtn>
                </StatusBar>
              </DocMain>
              <VScroll>
                <ScrollBtn $w={15}><Tri $dir="up" $s={4} /></ScrollBtn>
                <VGap $h={280} />
                <ScrollBtn $w={15} $h={15} />
                <VGap $h={283} />
                <ScrollBtn $w={15}><Tri $dir="down" $s={4} /></ScrollBtn>
                <VCorner />
              </VScroll>
            </DocBody>
          </DocArea>
          <RightDock>
            <DockHeader><DockChevrons $ml={23}><S w={9} h={6}><path d="M4 0 V6 L0 3 Z M9 0 V6 L5 3 Z" fill="#ccc" /></S></DockChevrons></DockHeader>
            <DockGroup $h={74}>
              <Dots $w={28} />
              <DockIcon><S s={20}><path d="M1 11 Q2 4 12 2 Q19 1 19 6 Q19 9 14 10 Q11 11 12 14 Q11 18 6 17 Q1 16 1 11 Z" fill="#333" /><circle cx="6" cy="9" r="1.6" fill="#ddd" /><circle cx="10" cy="6" r="1.6" fill="#ddd" /><circle cx="15" cy="5" r="1.6" fill="#ddd" /><circle cx="6" cy="14" r="1.8" fill="#ddd" /></S></DockIcon>
              <DockIcon><S s={20}><defs><linearGradient id="gr4" x1="0" y1="0" x2="1" y2="1"><stop offset="0" stopColor="#eee" /><stop offset="1" stopColor="#222" /></linearGradient></defs><path d="M3 2 Q17 4 18 18 H3 Z" fill="url(#gr4)" stroke="#111" strokeWidth="1.4" /></S></DockIcon>
            </DockGroup>
            <DockGroup $h={104}>
              <Dots $w={28} />
              <DockIcon><S s={18}><rect x="1" y="1" width="16" height="16" fill="#333" /><path d="M11 1v16M6 1v16M1 6h16M1 11h16" stroke="#ddd" /><rect x="11.5" y="1.5" width="5" height="4" fill="#fff" /><rect x="6.5" y="11.5" width="4" height="5" fill="#eee" /><rect x="11.5" y="11.5" width="5" height="5" fill="#fff" /></S></DockIcon>
              <DockIcon><S w={18} h={22}><rect x="5" y="12" width="9" height="9" fill="#fff" stroke="#000" strokeWidth="2" /><path d="M7 12 L4 2 M9 12 V1 M12 12 L15 4" stroke="#111" strokeWidth="2.2" /></S></DockIcon>
              <DockIcon><S s={20}><circle cx="10" cy="5.5" r="4.5" fill="#222" /><circle cx="5" cy="11" r="4.5" fill="#222" /><circle cx="15" cy="11" r="4.5" fill="#222" /><path d="M9 11 L5 18 H15 L11 11 Z" fill="#222" /></S></DockIcon>
            </DockGroup>
            <DockGroup $h={104}>
              <Dots $w={28} />
              <DockIcon><S w={18} h={14}><path d="M1 1h7M10 1h7" stroke="#333" /><rect x="1" y="4" width="16" height="2" fill="#333" /><rect x="1" y="8" width="16" height="5" fill="#333" /></S></DockIcon>
              <DockIcon><S w={18} h={14}><defs><linearGradient id="gr5"><stop offset="0" stopColor="#fff" /><stop offset="1" stopColor="#000" /></linearGradient></defs><rect x=".5" y=".5" width="17" height="12" fill="url(#gr5)" stroke="#111" /></S></DockIcon>
              <DockIcon><S s={18}><circle cx="7" cy="7" r="6" fill="#333" /><circle cx="11" cy="11" r="6" fill="#ddd" fillOpacity=".6" stroke="#333" /></S></DockIcon>
            </DockGroup>
            <DockGroup $h={74}>
              <Dots $w={28} />
              <DockIcon><S s={18}><circle cx="9" cy="9" r="8" fill="none" stroke="#333" strokeDasharray="1.5 1" /><circle cx="9" cy="9" r="6" fill="#333" /></S></DockIcon>
              <DockIcon><S s={18}><rect x="5" y="1" width="12" height="12" fill="#fff" stroke="#222" /><rect x="1" y="10" width="5" height="5" fill="#eee" stroke="#222" /><rect x="4" y="12" width="5" height="5" fill="#ccc" stroke="#222" /></S></DockIcon>
            </DockGroup>
            <DockGroup $h={74}>
              <Dots $w={28} />
              <DockIcon><S s={18}><path d="M9 2 L17 7 L9 12 L1 7 Z" fill="#e8e8e8" stroke="#999" /><path d="M1 9 L9 14 L17 9 L17 11 L9 16 L1 11 Z" fill="#333" /></S></DockIcon>
              <DockIcon><S s={20}><path d="M2 1H8L11 4V11H2Z" fill="#fff" stroke="#222" /><path d="M8 7H15L18 10V18H8Z" fill="#eee" stroke="#222" /></S></DockIcon>
            </DockGroup>
          </RightDock>
        </Work>
      </Frame>
      <Taskbar>
        <StartBtn>
          <S s={15}><path d="M1 3 Q4 1 7 3 V7 Q4 5 1 7 Z" fill="#e64" /><path d="M8 3 Q11 5 14 3 V7 Q11 9 8 7 Z" fill="#7b3" /><path d="M1 8 Q4 6 7 8 V12 Q4 10 1 12 Z" fill="#38c" /><path d="M8 8 Q11 10 14 8 V12 Q11 14 8 12 Z" fill="#ec3" /></S>
          开始
        </StartBtn>
        <Quick $ml={8}><S s={17}><circle cx="8.5" cy="8.5" r="7.5" fill="#fff" stroke="#222" strokeWidth="1" /><path d="M8.5 1 A7.5 7.5 0 0 1 16 8.5 H11Z" fill="#e9c430" /><path d="M16 8.5 A7.5 7.5 0 0 1 8.5 16 V12Z" fill="#59a33a" /><path d="M8.5 16 A7.5 7.5 0 0 1 1 8.5 H5Z" fill="#d03a2a" /><path d="M7 6 L12 8.5 L7 11 Z" fill="#245" /></S></Quick>
        <Quick $ml={7}><S s={17}><rect x="2" y="3" width="12" height="13" rx="2" fill="#3a7fd8" stroke="#1c4a90" /><path d="M5 7 H10 M5 10 H10" stroke="#fff" strokeWidth="1.4" /><path d="M10 6 L16 1" stroke="#e8a020" strokeWidth="2" /></S></Quick>
        <Quick $ml={6}><S s={18}><circle cx="9" cy="9" r="5" fill="none" stroke="#2a72d0" strokeWidth="3" /><path d="M4 9 H14" stroke="#2a72d0" strokeWidth="2" /><ellipse cx="9" cy="9" rx="9" ry="3.4" fill="none" stroke="#3aa0e0" strokeWidth="1" transform="rotate(-30 9 9)" /></S></Quick>
        <Chev>»</Chev>
        <TaskBtn>
          <S s={16}><rect width="16" height="16" fill="#c85a00" /><rect x="1" y="1" width="14" height="14" fill="#e07810" /><path d="M3 12 L6 4 L9 12 M4 9.5 H8 M11 7 V12 M11 4 V5.5" fill="none" stroke="#4a1800" strokeWidth="1.2" /></S>
          <span>未标题<Latin>-1* @ 158.25%...</Latin></span>
        </TaskBtn>
        <Tray>
          <S w={17} h={15}><path d="M5 1 Q6 3 9 2 Q11 1 12 3" fill="none" stroke="#222" /><rect x="1" y="4" width="15" height="10" rx="1" fill="#e8e8e8" stroke="#222" /><path d="M3 6.5h11M3 8.5h11M3 10.5h11M5 6v6M8 6v6M11 6v6" stroke="#555" /></S>
          <Vr $ml={4} />
          <TrayBox>«
            <S w={17} h={17}><rect x="1" y="3" width="9" height="7" fill="#2a4aa0" stroke="#224" /><rect x="3" y="10" width="7" height="5" fill="#cfd8e8" stroke="#667" /><path d="M12 2 Q14 4 13 7 M15 1 Q17 4 15 8" fill="none" stroke="#778" /></S>
          </TrayBox>
        </Tray>
      </Taskbar>
      <Menu>
        {ITEMS.map((it, i) =>
          "sep" in it ? <Sep key={i} /> : (
            <Row key={i} $off={it.off}>
              {it.ck && <Check><CheckMark /></Check>}
              {it.t}{it.k && <Mn k={it.k} />}{it.tail && <Latin>{it.tail}</Latin>}
              {it.sc && <Shortcut>{it.sc}</Shortcut>}
              {it.sub && <Sub />}
            </Row>
          ))}
      </Menu>
    </Root>
  );
}
